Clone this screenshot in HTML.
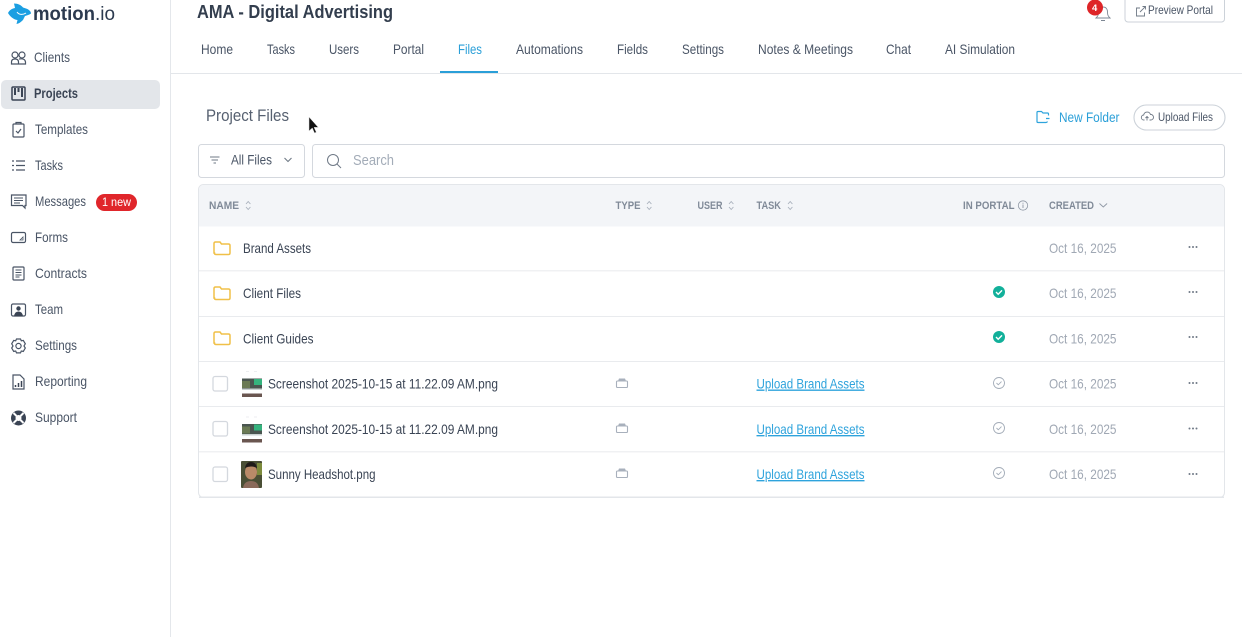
<!DOCTYPE html>
<html lang="en"><head><meta charset="utf-8"><title>Project Files</title>
<style>
html,body{margin:0;padding:0;background:#fff;width:1242px;height:637px;overflow:hidden}
svg{display:block}
text{font-family:"Liberation Sans",sans-serif;font-size:13.800px;fill:#3f4a5a}
.nav{font-size:13.800px;fill:#4a5566}
.tab{font-size:13.800px;fill:#4a5566}
.hd{font-size:11px;font-weight:bold;fill:#808a98}
.name{font-size:13.800px;fill:#3a4454}
.date{font-size:13.800px;fill:#a0a8b4}
.lnk{font-size:13.800px;fill:#2ea3dc;text-decoration:underline}
.i{fill:none;stroke:#4a5566;stroke-width:1.2}
.s{fill:none;stroke:#a8b0bc;stroke-width:.9}
</style></head><body>
<svg width="1242" height="637" viewBox="0 0 1242 637" xmlns="http://www.w3.org/2000/svg">
<rect width="1242" height="637" fill="#fff"/>
<!-- sidebar -->
<rect x="170" y="0" width="1" height="637" fill="#e4e7eb"/>
<path d="M8 13 C9.500 10 12 8.500 15 8 L14 3.500 C18 3.500 21 5 23 7.500 L26 8.500 C29 9.500 31 11.500 31 13.500 C29 15 26.500 15.500 25 16 L23 20 C21 22 19 23.500 16.500 24 L17.500 20 C13.500 19.500 10 16.500 8 13Z" fill="#1b9fe2"/>
<path d="M17 12 C19 15 23 15 26 13" stroke="#fff" stroke-width="1" fill="none"/>
<text x="33" y="20" style="font-size:19px;font-weight:bold;fill:#2c3a4f" textLength="62" lengthAdjust="spacingAndGlyphs">motion</text>
<text x="95" y="20" style="font-size:19px;fill:#2c3a4f" textLength="20" lengthAdjust="spacingAndGlyphs">.io</text>
<rect x="1" y="80" width="159" height="29" rx="5" fill="#e3e6ea"/>

<g class="i"><circle cx="15" cy="55" r="3"/><circle cx="22" cy="55" r="3"/><path d="M11.500 64v-2q0-3 3.500-3q3.500 0 3.500 3v2z M19 59q6-1 6.500 3v2h-7"/></g>
<text class="nav" x="34" y="62" textLength="36" lengthAdjust="spacingAndGlyphs">Clients</text>

<rect x="12" y="87" width="13" height="13" rx="1" fill="none" stroke="#3a4454" stroke-width="1.500"/><path d="M15 88v7M18.500 88v4M22 88v9" stroke="#3a4454" stroke-width="2" fill="none"/>
<text x="34" y="98" style="font-weight:bold;fill:#3a4454" textLength="44" lengthAdjust="spacingAndGlyphs">Projects</text>

<g class="i"><rect x="13" y="124" width="11" height="13" rx="1"/><path d="M16 124v-1.500h5V124M16 131l2 2 3-4"/></g>
<text class="nav" x="35" y="134" textLength="53" lengthAdjust="spacingAndGlyphs">Templates</text>

<g class="i"><path d="M16 161h9M16 165.500h9M16 170h9M12 161h2M12 165.500h2M12 170h2"/></g>
<text class="nav" x="35" y="170" textLength="28" lengthAdjust="spacingAndGlyphs">Tasks</text>

<g class="i"><path d="M11.500 195h14.500v10.500h-1v2.500l-2.500-2.500h-11z"/><path d="M14 198h9M14 200.500h9M14 203h6" stroke-width="1"/></g>
<text class="nav" x="35" y="206" textLength="51" lengthAdjust="spacingAndGlyphs">Messages</text>
<rect x="96" y="194" width="41" height="17" rx="8.500" fill="#e0262b"/>
<text x="102" y="206" style="font-size:12px;fill:#fff" textLength="29" lengthAdjust="spacingAndGlyphs">1 new</text>

<g class="i"><rect x="11.500" y="232.500" width="14" height="10" rx="1.500"/><path d="M20 240l3-3v3z" stroke-width=".8"/></g>
<text class="nav" x="35" y="242" textLength="33" lengthAdjust="spacingAndGlyphs">Forms</text>

<g class="i"><rect x="13" y="267" width="11" height="13" rx="1"/><path d="M15.500 270h6M15.500 272.500h6M15.500 275h6M15.500 277h4" stroke-width="1"/></g>
<text class="nav" x="35" y="278" textLength="52" lengthAdjust="spacingAndGlyphs">Contracts</text>

<g class="i"><rect x="11.500" y="304" width="14" height="12" rx="1.500"/></g><circle cx="18.500" cy="308.500" r="2.200" fill="#3a4454"/><path d="M14 316.500q.5-5 4.500-5q4 0 4.500 5z" fill="#3a4454"/>
<text class="nav" x="35" y="314" textLength="28" lengthAdjust="spacingAndGlyphs">Team</text>

<g class="i"><circle cx="18.500" cy="346" r="2.600"/><path d="M16.500 339h4l.8 1.800 2-.4 2 3.400-1.300 2.200 1.300 2-2 3.400-2-.4-.8 1.900h-4l-.8-1.900-2 .4-2-3.400 1.300-2-1.300-2.200 2-3.400 2 .4z"/></g>
<text class="nav" x="35" y="350" textLength="42" lengthAdjust="spacingAndGlyphs">Settings</text>

<g class="i"><path d="M13 375h7l4 4v10h-11z"/></g><path d="M15.500 387v-2M18.500 387v-4M21.500 387v-6" stroke="#3a4454" stroke-width="1.500" fill="none"/>
<text class="nav" x="35" y="386" textLength="52" lengthAdjust="spacingAndGlyphs">Reporting</text>

<circle cx="18.500" cy="418" r="7.500" fill="#3a4454"/><circle cx="18.500" cy="418" r="3" fill="#fff"/><path d="M13.500 413l3 3M23.500 413l-3 3M13.500 423l3-3M23.500 423l-3-3" stroke="#fff" stroke-width="2"/>
<text class="nav" x="35" y="422" textLength="42" lengthAdjust="spacingAndGlyphs">Support</text>

<!-- header -->
<text x="197" y="18" style="font-size:18.500px;font-weight:bold;fill:#333e4e" textLength="196" lengthAdjust="spacingAndGlyphs">AMA - Digital Advertising</text>
<path d="M1096 18h14c-2-2-2.500-3-2.500-6c0-3-1.500-5-4.500-5c-3 0-4.500 2-4.500 5c0 3-.5 4-2.500 6zM1101 20.500h4" fill="none" stroke="#7d8794" stroke-width=".9"/>
<circle cx="1095" cy="7.500" r="8" fill="#de2528"/>
<text x="1092" y="11" style="font-size:9.500px;font-weight:bold;fill:#fff">4</text>
<rect x="1125" y="-4" width="99.500" height="26" rx="3" fill="#fff" stroke="#ccd2d9"/>
<path d="M1140 8h-3.500v8h8v-3.500M1140 12l5.500-5.500M1142.500 6.500h3v3" fill="none" stroke="#6f7986" stroke-width=".9"/>
<text x="1148" y="14" style="font-size:12px;fill:#4a5566" textLength="65" lengthAdjust="spacingAndGlyphs">Preview Portal</text>

<!-- tabs -->
<text class="tab" x="201" y="54" textLength="32" lengthAdjust="spacingAndGlyphs">Home</text>
<text class="tab" x="267" y="54" textLength="28" lengthAdjust="spacingAndGlyphs">Tasks</text>
<text class="tab" x="329" y="54" textLength="30" lengthAdjust="spacingAndGlyphs">Users</text>
<text class="tab" x="393" y="54" textLength="31" lengthAdjust="spacingAndGlyphs">Portal</text>
<text class="tab" x="458" y="54" style="fill:#2a9fd8" textLength="24" lengthAdjust="spacingAndGlyphs">Files</text>
<text class="tab" x="516" y="54" textLength="67" lengthAdjust="spacingAndGlyphs">Automations</text>
<text class="tab" x="617" y="54" textLength="31" lengthAdjust="spacingAndGlyphs">Fields</text>
<text class="tab" x="682" y="54" textLength="42" lengthAdjust="spacingAndGlyphs">Settings</text>
<text class="tab" x="758" y="54" textLength="95" lengthAdjust="spacingAndGlyphs">Notes &amp; Meetings</text>
<text class="tab" x="886" y="54" textLength="25" lengthAdjust="spacingAndGlyphs">Chat</text>
<text class="tab" x="945" y="54" textLength="70" lengthAdjust="spacingAndGlyphs">AI Simulation</text>
<rect x="171" y="73" width="1071" height="1" fill="#e3e6ea"/>
<rect x="440" y="71" width="58" height="2" fill="#2a9fd8"/>

<!-- project files header -->
<text x="206" y="121" style="font-size:17px;fill:#566070" textLength="83" lengthAdjust="spacingAndGlyphs">Project Files</text>
<path d="M309 117v14l3.300-3 2.200 5 1.800-.8-2.200-4.800h4.200z" fill="#111" stroke="#ddd" stroke-width=".5"/>
<path d="M1048.500 115.500v-1.500q0-1-1-1h-4.500l-1.500-1.500h-3.500q-1 0-1 1v9q0 1 1 1h8q1 0 1.500-1M1046 118.500h3.500" fill="none" stroke="#2ea3dc" stroke-width="1.200"/>
<text x="1059" y="122" style="font-size:13.500px;fill:#2a9fd8" textLength="60.500" lengthAdjust="spacingAndGlyphs">New Folder</text>
<rect x="1134" y="105" width="91" height="25" rx="12.500" fill="#fff" stroke="#ccd2d9" stroke-width="1.100"/>
<path d="M1144 120.500h-.5a2.500 2.500 0 0 1-.3-5a3.500 3.500 0 0 1 6.800-.5a2.700 2.700 0 0 1 .5 5.500h-1.500M1146.500 121v-4M1145 118.500l1.500-1.500 1.500 1.500" fill="none" stroke="#6f7986" stroke-width=".9" transform="translate(.5 -.5)"/>
<text x="1158" y="121" style="font-size:12px;fill:#4a5566" textLength="55" lengthAdjust="spacingAndGlyphs">Upload Files</text>

<!-- filter & search -->
<rect x="198.500" y="144.500" width="106" height="33" rx="3" fill="#fff" stroke="#d4d8de"/>
<path d="M210 157h9.500M211.500 160h6.500M213.500 163h2.500" stroke="#6f7986" stroke-width="1" fill="none"/>
<text x="231" y="164.500" style="font-size:13.500px;fill:#4a5566" textLength="41" lengthAdjust="spacingAndGlyphs">All Files</text>
<path d="M284.500 158l3.500 3.500 3.500-3.500" stroke="#6f7986" stroke-width="1.100" fill="none"/>
<rect x="312.500" y="144.500" width="912" height="33" rx="3" fill="#fff" stroke="#d4d8de"/>
<circle cx="333" cy="160" r="5.500" fill="none" stroke="#6f7986" stroke-width="1"/><path d="M337 164l4 4" stroke="#6f7986" stroke-width="1"/>
<text x="353" y="165" style="font-size:15px;fill:#a3acb8" textLength="41" lengthAdjust="spacingAndGlyphs">Search</text>

<!-- table -->
<rect x="198.500" y="184.500" width="1026" height="313" rx="5" fill="#fff" stroke="#e3e6ea"/>
<path d="M199 226.500v-37a4.500 4.500 0 0 1 4.500-4.500h1016a4.500 4.500 0 0 1 4.500 4.500v37z" fill="#f3f5f8"/>
<text class="hd" x="209" y="209" textLength="30" lengthAdjust="spacingAndGlyphs">NAME</text>
<path class="s" d="M246 204l2.200-2.500 2.200 2.500M246 207l2.200 2.500 2.200-2.500"/>
<text class="hd" x="615.500" y="209" textLength="25" lengthAdjust="spacingAndGlyphs">TYPE</text>
<path class="s" d="M647 204l2.200-2.500 2.200 2.500M647 207l2.200 2.500 2.200-2.500"/>
<text class="hd" x="697.500" y="209" textLength="25" lengthAdjust="spacingAndGlyphs">USER</text>
<path class="s" d="M729 204l2.200-2.500 2.200 2.500M729 207l2.200 2.500 2.200-2.500"/>
<text class="hd" x="756.500" y="209" textLength="24.500" lengthAdjust="spacingAndGlyphs">TASK</text>
<path class="s" d="M788 204l2.200-2.500 2.200 2.500M788 207l2.200 2.500 2.200-2.500"/>
<text class="hd" x="963" y="209" textLength="51.500" lengthAdjust="spacingAndGlyphs">IN PORTAL</text>
<circle cx="1023" cy="205.500" r="4.700" fill="none" stroke="#8f98a5" stroke-width=".8"/><path d="M1023 204.500v3.500M1023 202.800v.9" stroke="#8f98a5" stroke-width=".9"/>
<text class="hd" x="1049" y="209" textLength="45" lengthAdjust="spacingAndGlyphs">CREATED</text>
<path d="M1099.500 203.500l3.800 3.500 3.800-3.500" fill="none" stroke="#8f98a5" stroke-width=".9"/>

<!-- row dividers -->
<rect x="199" y="270" width="1025" height="1.500" fill="#f0f1f3"/>
<rect x="199" y="316" width="1025" height="1" fill="#e9ebee"/>
<rect x="199" y="361" width="1025" height="1" fill="#e9ebee"/>
<rect x="199" y="406" width="1025" height="1" fill="#e9ebee"/>
<rect x="199" y="451" width="1025" height="1.500" fill="#f0f1f3"/>
<rect x="199" y="496.500" width="1025" height="1.500" fill="#e3e6ea"/>

<!-- folders -->
<g fill="none" stroke="#f0c048" stroke-width="1.500">
<path d="M214 253v-9.500q0-1.500 1.500-1.500h4.500l1.500 2h7q1.500 0 1.500 1.500v7.500q0 1.500-1.500 1.500h-12.500q-1.500 0-1.500-1.500z"/>
<path d="M214 298v-9.500q0-1.500 1.500-1.500h4.500l1.500 2h7q1.500 0 1.500 1.500v7.500q0 1.500-1.500 1.500h-12.500q-1.500 0-1.500-1.500z"/>
<path d="M214 343v-9.500q0-1.500 1.500-1.500h4.500l1.500 2h7q1.500 0 1.500 1.500v7.500q0 1.500-1.500 1.500h-12.500q-1.500 0-1.500-1.500z"/>
</g>
<text class="name" x="243" y="253" textLength="68" lengthAdjust="spacingAndGlyphs">Brand Assets</text>
<text class="name" x="243" y="298" textLength="58" lengthAdjust="spacingAndGlyphs">Client Files</text>
<text class="name" x="243" y="343.500" textLength="70.500" lengthAdjust="spacingAndGlyphs">Client Guides</text>

<!-- checkboxes -->
<g fill="#fff" stroke="#d4d8de" stroke-width="1.300">
<rect x="213" y="376.500" width="14.500" height="14.500" rx="2"/>
<rect x="213" y="421.500" width="14.500" height="14.500" rx="2"/>
<rect x="213" y="467" width="14.500" height="14.500" rx="2"/>
</g>

<!-- thumbs -->
<g>
<rect x="242" y="378.500" width="20" height="10" fill="#4a5550"/><rect x="242" y="381" width="8" height="7" fill="#6b7a55"/><rect x="254" y="379" width="8" height="6" fill="#35b37e"/><rect x="242" y="388.500" width="20" height="1.500" fill="#c9d0d0"/><rect x="242" y="393.500" width="20" height="3.500" fill="#6a5650"/><rect x="246" y="371" width="3" height="1" fill="#eceef0"/><rect x="254" y="371" width="3" height="1" fill="#eceef0"/>
<rect x="242" y="424" width="20" height="10" fill="#4a5550"/><rect x="242" y="426.500" width="8" height="7" fill="#6b7a55"/><rect x="254" y="424.500" width="8" height="6" fill="#35b37e"/><rect x="242" y="434" width="20" height="1.500" fill="#c9d0d0"/><rect x="242" y="439" width="20" height="3.500" fill="#6a5650"/><rect x="246" y="416.500" width="3" height="1" fill="#eceef0"/><rect x="254" y="416.500" width="3" height="1" fill="#eceef0"/>
<rect x="241" y="461" width="21" height="27" rx="1" fill="#4a4f35"/><rect x="257" y="463" width="5" height="12" fill="#7c8a3c"/><ellipse cx="251" cy="472" rx="6" ry="7.500" fill="#b98a68"/><path d="M245 468q1-6 6-6q5 0 6 6q-6-3-12 0z" fill="#1f1a18"/><path d="M243 488q1-7 8-7q7 0 8 7z" fill="#8a6a5a"/>
</g>
<text class="name" x="268" y="388.500" textLength="230" lengthAdjust="spacingAndGlyphs">Screenshot 2025-10-15 at 11.22.09 AM.png</text>
<text class="name" x="268" y="434" textLength="230" lengthAdjust="spacingAndGlyphs">Screenshot 2025-10-15 at 11.22.09 AM.png</text>
<text class="name" x="268" y="479" textLength="107.500" lengthAdjust="spacingAndGlyphs">Sunny Headshot.png</text>

<!-- type icons -->
<g fill="none" stroke="#a8b0bc" stroke-width="1.100">
<rect x="616.500" y="381" width="11" height="6.500" rx="1"/><rect x="616.500" y="426" width="11" height="6.500" rx="1"/><rect x="616.500" y="471" width="11" height="6.500" rx="1"/>
</g>
<path d="M618 381l1-2.500h6l1 2.500zM618 426l1-2.500h6l1 2.500zM618 471l1-2.500h6l1 2.500z" fill="#a8b0bc"/>

<text class="lnk" x="756.500" y="388.500" textLength="108" lengthAdjust="spacingAndGlyphs">Upload Brand Assets</text>
<text class="lnk" x="756.500" y="434" textLength="108" lengthAdjust="spacingAndGlyphs">Upload Brand Assets</text>
<text class="lnk" x="756.500" y="479" textLength="108" lengthAdjust="spacingAndGlyphs">Upload Brand Assets</text>

<!-- portal checks -->
<circle cx="999" cy="292" r="6" fill="#12b09a"/><path d="M996 292l2.200 2.200 3.800-3.800" stroke="#fff" stroke-width="1.400" fill="none"/>
<circle cx="999" cy="337" r="6" fill="#12b09a"/><path d="M996 337l2.200 2.200 3.800-3.800" stroke="#fff" stroke-width="1.400" fill="none"/>
<g fill="none" stroke="#a3acb8" stroke-width=".9">
<circle cx="999" cy="383" r="5.500"/><path d="M996.500 383l1.800 1.800 3.200-3.200"/>
<circle cx="999" cy="428" r="5.500"/><path d="M996.500 428l1.800 1.800 3.200-3.200"/>
<circle cx="999" cy="473" r="5.500"/><path d="M996.500 473l1.800 1.800 3.200-3.200"/>
</g>

<!-- dates -->
<text class="date" x="1049" y="253" textLength="67.500" lengthAdjust="spacingAndGlyphs">Oct 16, 2025</text>
<text class="date" x="1049" y="298" textLength="67.500" lengthAdjust="spacingAndGlyphs">Oct 16, 2025</text>
<text class="date" x="1049" y="343.500" textLength="67.500" lengthAdjust="spacingAndGlyphs">Oct 16, 2025</text>
<text class="date" x="1049" y="388.500" textLength="67.500" lengthAdjust="spacingAndGlyphs">Oct 16, 2025</text>
<text class="date" x="1049" y="434" textLength="67.500" lengthAdjust="spacingAndGlyphs">Oct 16, 2025</text>
<text class="date" x="1049" y="479" textLength="67.500" lengthAdjust="spacingAndGlyphs">Oct 16, 2025</text>

<!-- menus -->
<g fill="#6f7986">
<circle cx="1189.500" cy="247" r="1"/><circle cx="1193" cy="247" r="1"/><circle cx="1196.500" cy="247" r="1"/>
<circle cx="1189.500" cy="292" r="1"/><circle cx="1193" cy="292" r="1"/><circle cx="1196.500" cy="292" r="1"/>
<circle cx="1189.500" cy="337" r="1"/><circle cx="1193" cy="337" r="1"/><circle cx="1196.500" cy="337" r="1"/>
<circle cx="1189.500" cy="383" r="1"/><circle cx="1193" cy="383" r="1"/><circle cx="1196.500" cy="383" r="1"/>
<circle cx="1189.500" cy="428.500" r="1"/><circle cx="1193" cy="428.500" r="1"/><circle cx="1196.500" cy="428.500" r="1"/>
<circle cx="1189.500" cy="474" r="1"/><circle cx="1193" cy="474" r="1"/><circle cx="1196.500" cy="474" r="1"/>
</g>
</svg>
</body></html>
